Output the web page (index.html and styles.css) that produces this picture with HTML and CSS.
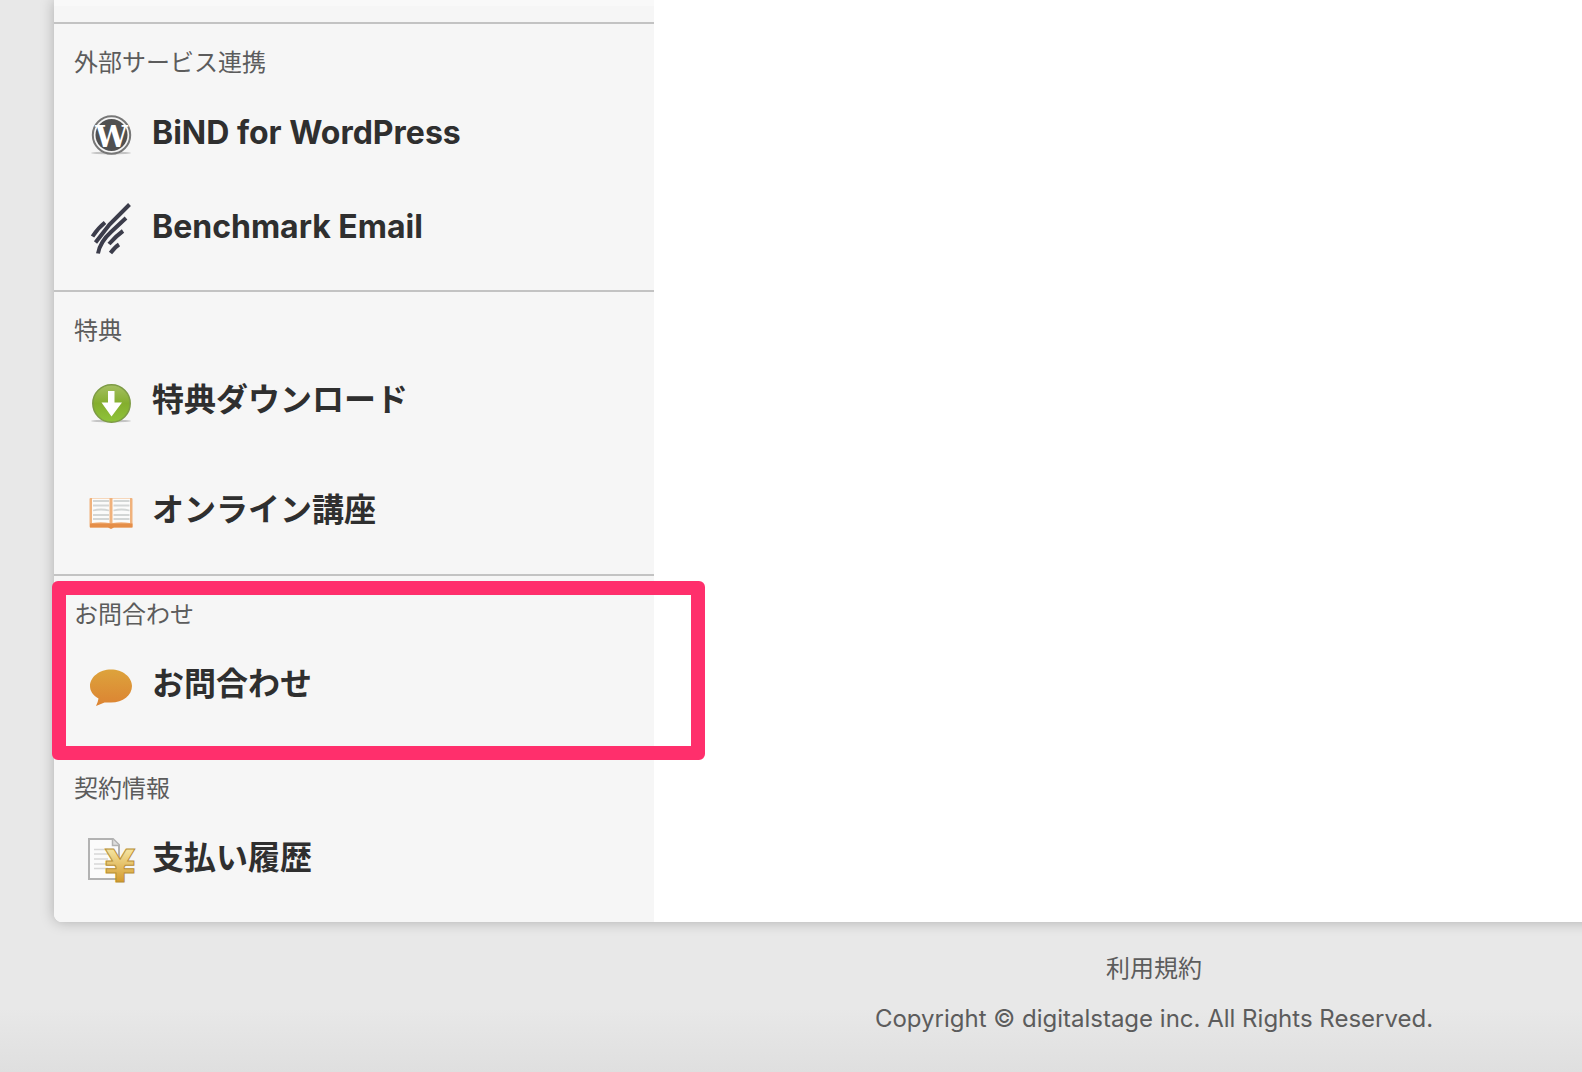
FILE: index.html
```
<!DOCTYPE html>
<html lang="ja">
<head>
    <meta charset="UTF-8">
    <meta name="viewport" content="width=device-width, initial-scale=1.0">
    <title>マイページ</title>
    <link rel="stylesheet" href="styles.css">
</head>
<body>
    <main class="panel">
        <nav class="sidebar">
            <div class="sidebar-top"></div>

            <!-- 外部サービス連携 -->
            <section class="menu">
                <h2>外部サービス連携</h2>
                <ul>
                    <li>
                        <a href="#">
                            <svg class="icon" viewBox="0 0 48 48" aria-hidden="true">
                                <ellipse cx="24" cy="42" rx="20" ry="1.500" fill="#c4c4c4"/>
                                <circle cx="24.500" cy="24" r="18.700" fill="#f5f5f5" stroke="#777" stroke-width="2"/>
                                <circle cx="24.500" cy="24" r="16" fill="#505050"/>
                                <text class="wp-mark" x="24.500" y="36" text-anchor="middle">W</text>
                            </svg>
                            <span>BiND for WordPress</span>
                        </a>
                    </li>
                    <li>
                        <a href="#">
                            <svg class="icon" viewBox="0 0 48 48" aria-hidden="true">
                                <g fill="none" stroke="#3c3d4b" stroke-width="4">
                                    <path d="M42.500 -0.500L22.500 19.500L8.500 37.500"/>
                                    <path d="M39 13L24 27Q13 37 11 48.500"/>
                                    <path d="M18 17.500Q11 23 5.500 31.500"/>
                                    <path d="M36 26Q29 31 22 39"/>
                                    <path d="M32 39.500Q28 42 23.500 48"/>
                                </g>
                            </svg>
                            <span>Benchmark Email</span>
                        </a>
                    </li>
                </ul>
            </section>

            <!-- 特典 -->
            <section class="menu menu-ja">
                <h2>特典</h2>
                <ul>
                    <li>
                        <a href="#">
                            <svg class="icon" viewBox="0 0 48 48" aria-hidden="true">
                                <defs>
                                    <linearGradient id="green" x1="0" y1="0" x2="0" y2="1">
                                        <stop offset="0" stop-color="#a5bf62"/>
                                        <stop offset="0.5" stop-color="#84ae2e"/>
                                        <stop offset="1" stop-color="#8fc43a"/>
                                    </linearGradient>
                                </defs>
                                <ellipse cx="24" cy="42" rx="20" ry="1.500" fill="#c4c4c4"/>
                                <circle cx="24.500" cy="24.500" r="18.700" fill="url(#green)" stroke="#7d9b45" stroke-width="1.500"/>
                                <path d="M21 12h6.500v11.500H35L24.500 37.500 14.500 23.500H21z" fill="#fff"/>
                            </svg>
                            <span>特典ダウンロード</span>
                        </a>
                    </li>
                    <li>
                        <a href="#">
                            <svg class="icon" viewBox="0 0 48 48" aria-hidden="true">
                                <rect x="2.500" y="9" width="43" height="29.500" rx="1" fill="#f0b27c"/>
                                <path d="M3 34.500h42.500v4H27l-3 1.500-3-1.500H3z" fill="#e58e48"/>
                                <path d="M5 9.500h17.500V34Q14 32.500 5 34zM25.500 9.500h17.500V34Q34 32.500 25.500 34z" fill="#fbfbfa"/>
                                <g fill="none" stroke="#d3d6d5" stroke-width="1.800">
                                    <path d="M6 12h16M6 16.500h16M6 21.500q8-2 16 0M6 26h16M6 30h16"/>
                                    <path d="M26.500 12h16M26.500 16.500h16M26.500 21.500q8-2 16 0M26.500 26h16M26.500 30h16"/>
                                </g>
                            </svg>
                            <span>オンライン講座</span>
                        </a>
                    </li>
                </ul>
            </section>

            <!-- お問合わせ -->
            <section class="menu menu-ja menu-marked">
                <h2>お問合わせ</h2>
                <ul>
                    <li>
                        <a href="#">
                            <svg class="icon" viewBox="0 0 48 48" aria-hidden="true">
                                <defs>
                                    <linearGradient id="orange" x1="0" y1="0" x2="0" y2="1">
                                        <stop offset="0" stop-color="#dda33c"/>
                                        <stop offset="1" stop-color="#dc8332"/>
                                    </linearGradient>
                                </defs>
                                <path d="M24 6.500C35.500 6.500 45 14 45 23S36 39.500 24 39.500Q20 39.500 17.500 39.500L9 43Q11 39 11.500 35.500C6 32.500 3 28 3 23 3 14 12.500 6.500 24 6.500z" fill="url(#orange)"/>
                            </svg>
                            <span>お問合わせ</span>
                        </a>
                    </li>
                </ul>
            </section>

            <!-- 契約情報 -->
            <section class="menu menu-ja">
                <h2>契約情報</h2>
                <ul>
                    <li>
                        <a href="#">
                            <svg class="icon" viewBox="0 0 48 48" aria-hidden="true">
                                <defs>
                                    <linearGradient id="gold" x1="0" y1="0" x2="0" y2="1">
                                        <stop offset="0.2" stop-color="#f3e09a"/>
                                        <stop offset="0.8" stop-color="#d39a2c"/>
                                    </linearGradient>
                                </defs>
                                <path d="M2 2h24l6 6v34H2z" fill="#fbfbfb" stroke="#b2b2b2" stroke-width="2"/>
                                <path d="M25.500 2v6.500H32" fill="#ddd" stroke="#b2b2b2" stroke-width="1.500"/>
                                <path d="M7 12.500h14M7 17h14M7 22h14M7 27h14M7 31.500h14" stroke="#d8d8d8" stroke-width="1.500"/>
                                <text class="yen-mark" x="33" y="45" text-anchor="middle">¥</text>
                            </svg>
                            <span>支払い履歴</span>
                        </a>
                    </li>
                </ul>
            </section>
        </nav>
    </main>

    <footer class="footer">
        <a href="#">利用規約</a>
        <p>Copyright © digitalstage inc. All Rights Reserved.</p>
    </footer>
</body>
</html>
```
FILE: styles.css
```
* {
    box-sizing: border-box;
}
body {
    margin: 0;
    background: linear-gradient(to top, #dfdfdf, #e8e8e8 64px);
    color: #5c5c5c;
    font-family: Inter, "Noto Sans CJK JP", sans-serif;
    font-size: 24px;
    overflow-x: hidden;
}
h2, ul, p {
    margin: 0;
    padding: 0;
}
a {
    color: inherit;
    text-decoration: none;
}
.panel {
    margin-left: 54px;
    margin-right: -20px;
    background-color: #fff;
    border-bottom-left-radius: 8px;
    box-shadow: 0 0 14px rgba(0, 0, 0, 0.25);
}
.sidebar {
    width: 600px;
    background-color: #f6f6f6;
    border-bottom-left-radius: 8px;
}
.sidebar-top {
    height: 22px;
    border-top: 6px solid #f9f9f9;
}
.menu {
    position: relative;
    border-top: 2px solid #c3c3c3;
}
.menu h2 {
    padding-left: 20px;
    font-size: 24px;
    font-weight: 400;
    line-height: 78px;
}
.menu ul {
    display: flex;
    flex-direction: column;
    gap: 16px;
    list-style: none;
}
.menu li {
    padding: 0 20px 32px 33px;
}
.menu:not(.menu-ja) ul {
    gap: 0;
}
.menu a {
    display: flex;
    align-items: center;
    gap: 17px;
    height: 62px;
    color: #2f2f2f;
    font-size: 32px;
    font-weight: 700;
}
.menu a:hover {
    color: #666;
}
.menu span {
    margin-bottom: 2px;
}
.menu-ja span {
    margin-bottom: 8px;
}
.icon {
    width: 48px;
    height: 48px;
    margin-top: 4px;
    overflow: visible;
}
.wp-mark {
    fill: #fff;
    font-family: "DejaVu Serif", serif;
    font-size: 29px;
    font-weight: 700;
}
.yen-mark {
    fill: url(#gold);
    stroke: #b98f35;
    stroke-width: 1px;
    font-family: "DejaVu Sans", sans-serif;
    font-size: 44px;
    font-weight: 700;
}
/* 強調枠 */
.menu-marked::after {
    content: "";
    position: absolute;
    top: 5px;
    left: -2px;
    box-sizing: border-box;
    width: 653px;
    height: 179px;
    border: 14px solid #ff2f6c;
    border-radius: 6px;
    z-index: 1;
    pointer-events: none;
}
.footer {
    display: flex;
    flex-direction: column;
    align-items: center;
    margin-left: 726px;
    padding: 22px 0 28px;
    line-height: 50px;
}
```
